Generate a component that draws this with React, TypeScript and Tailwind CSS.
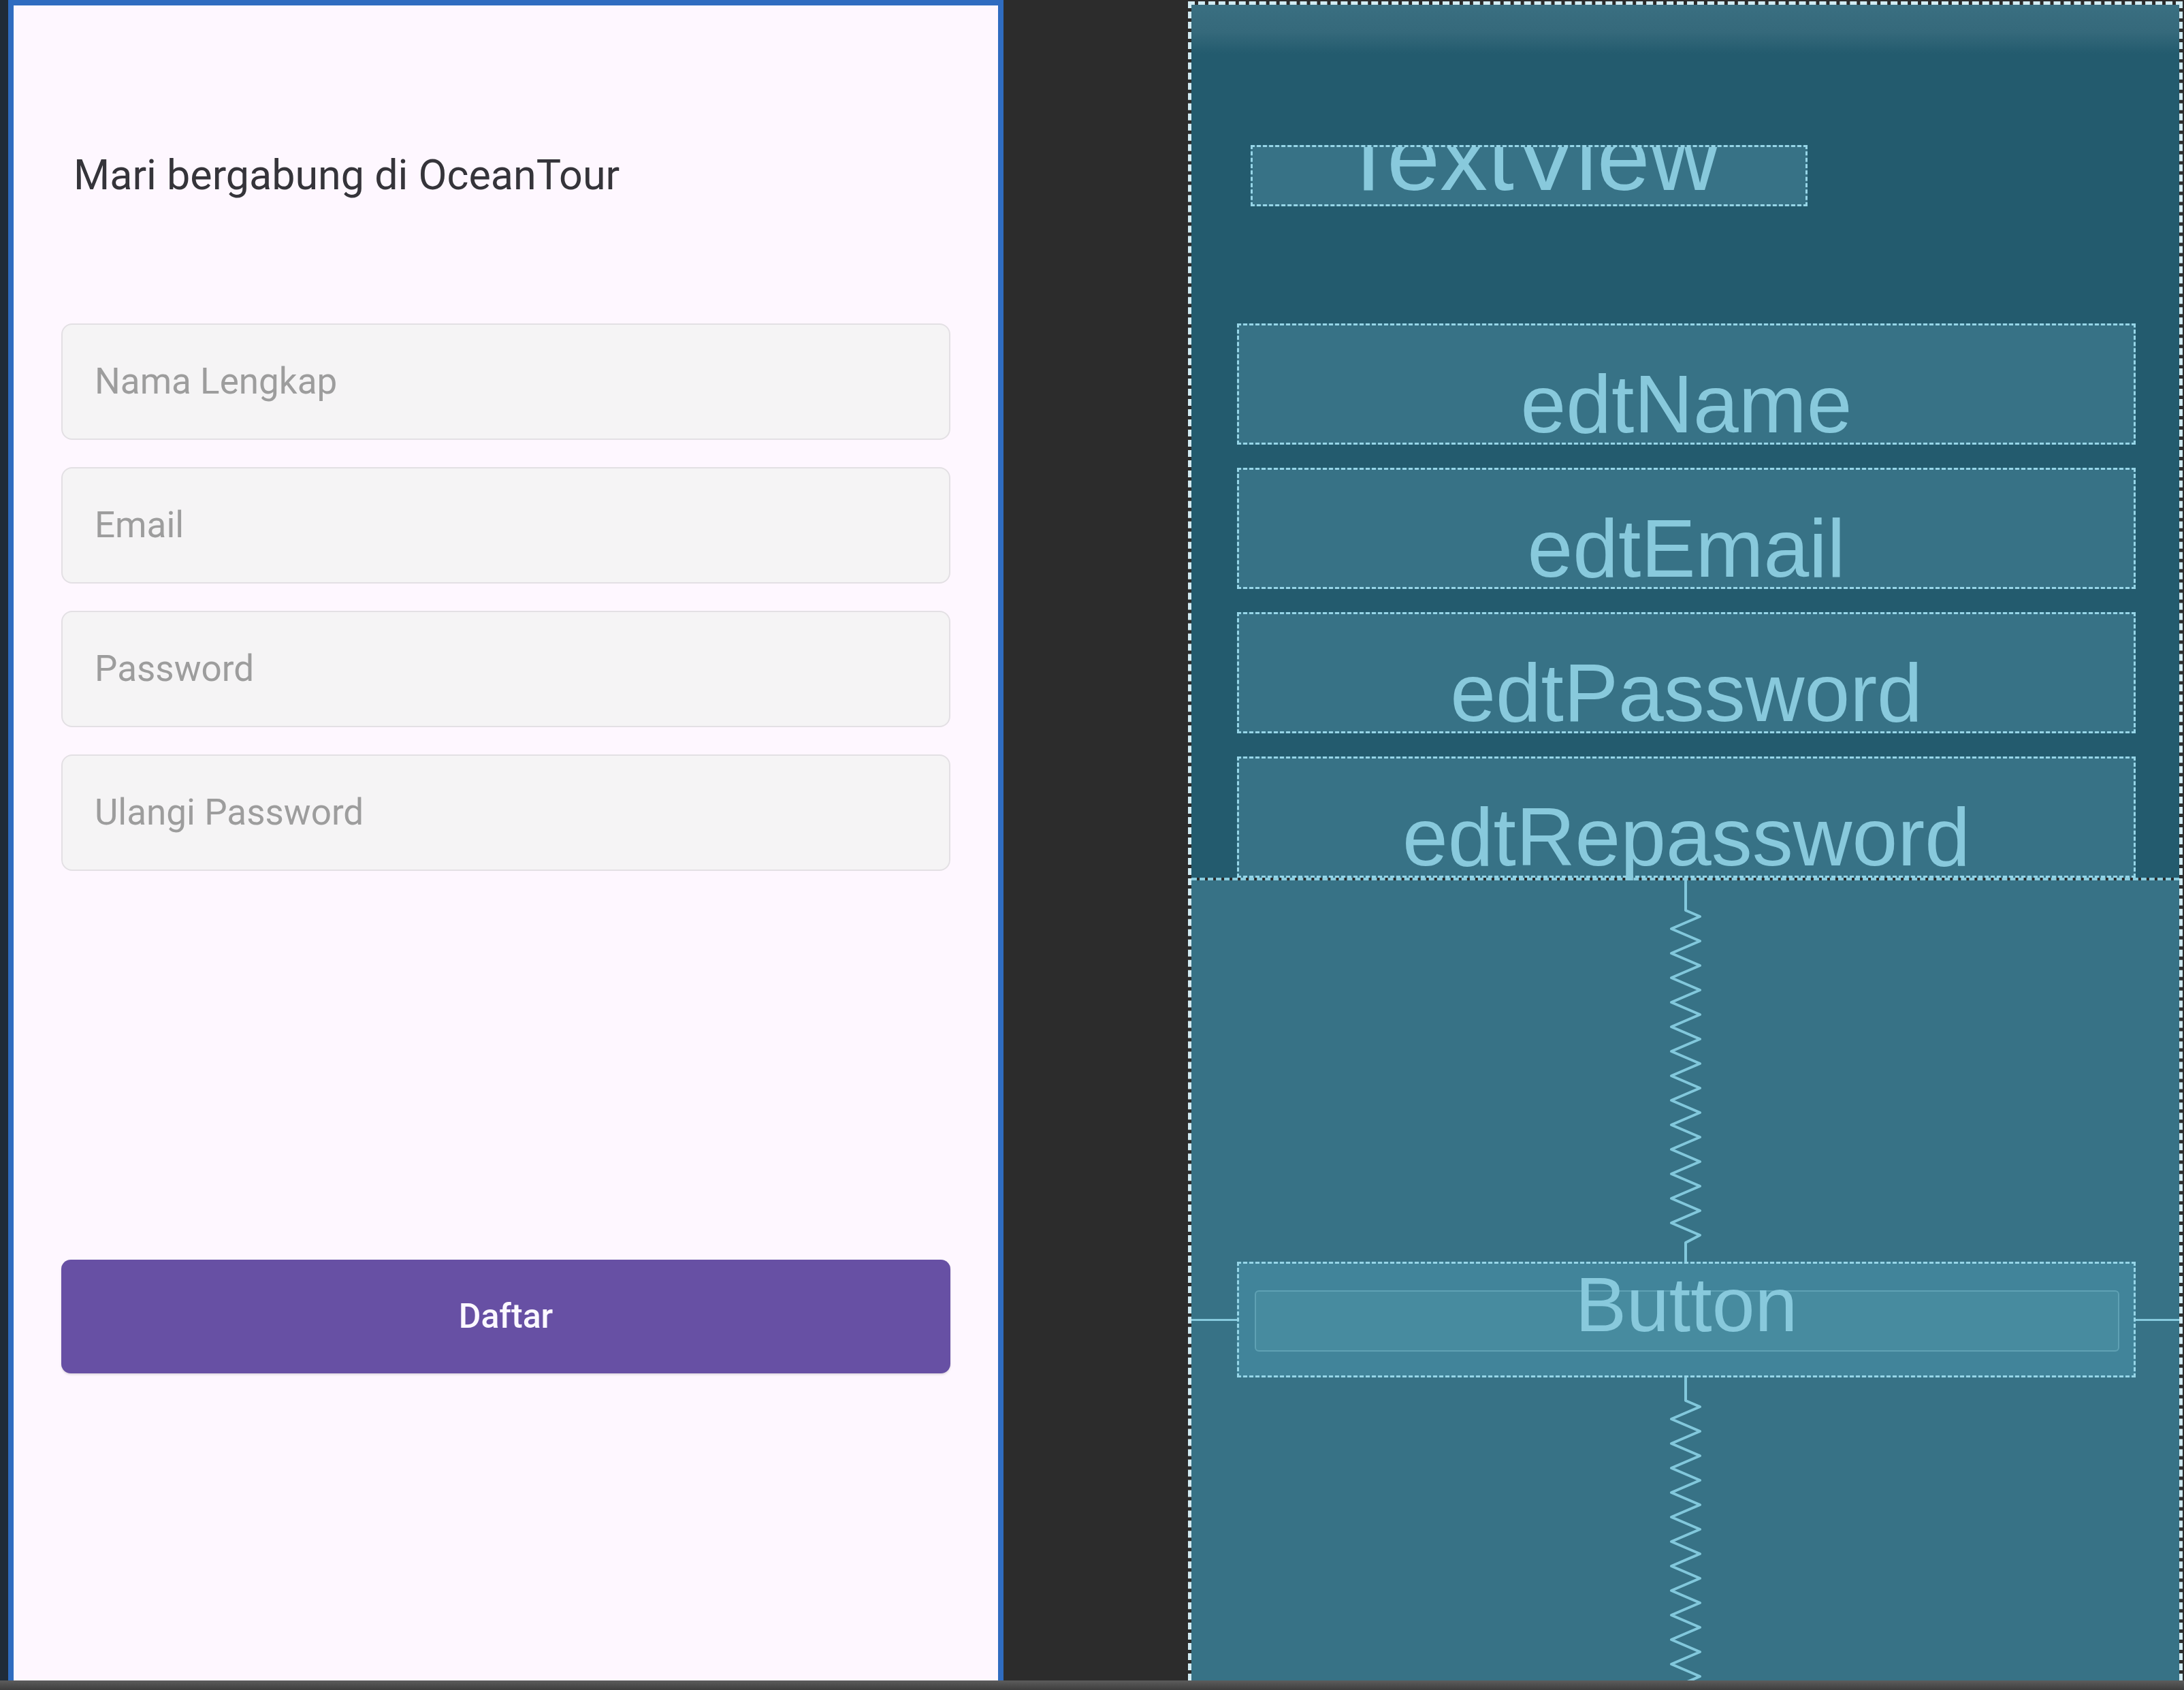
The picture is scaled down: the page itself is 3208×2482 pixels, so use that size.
import React from "react";

function springPoints(height: number, lead: number, end: number, amp: number, period: number) {
  const cx = 30;
  const pts: string[] = [`${cx},0`, `${cx},${lead}`];
  let k = 0;
  let y = lead + period / 4;
  while (y < end) {
    const x = k % 2 === 0 ? cx + amp : cx - amp;
    pts.push(`${x},${y}`);
    k++;
    y = lead + period / 4 + (k * period) / 2;
  }
  pts.push(`${cx},${Math.min(end + period / 4, height)}`);
  pts.push(`${cx},${height}`);
  return pts.join(" ");
}

function Spring({ height, lead, end }: { height: number; lead: number; end: number }) {
  return (
    <svg width="60" height={height} viewBox={`0 0 60 ${height}`} className="shrink-0 block">
      <polyline
        points={springPoints(height, lead, end, 21, 36)}
        fill="none"
        stroke="#82c8dc"
        strokeWidth="4"
        strokeLinejoin="round"
      />
    </svg>
  );
}

const fieldsLeft = ["Nama Lengkap", "Email", "Password", "Ulangi Password"];
const fieldsBlue = ["edtName", "edtEmail", "edtPassword", "edtRepassword"];

export default function App() {
  return (
    <div className="w-[3208px] h-[2482px] flex flex-col bg-[#2c2c2c] overflow-hidden">
      <div className="h-[2468px] flex">
        {/* left dark strip */}
        <div className="w-[12px] h-full bg-[#1f2b38]" />
        {/* phone design */}
        <div
          className="w-[1462px] h-full border-t-[8px] border-l-[8px] border-r-[8px] border-[#2f6cc0] bg-[#fef7ff] flex flex-col px-[70px]"
          style={{ fontFamily: "Roboto, 'Noto Sans', sans-serif" }}
        >
          <div className="mt-[213px] ml-[18px] text-[61px] leading-[72px] text-[#35343a]">
            Mari bergabung di OceanTour
          </div>
          <div className="mt-[182px] flex flex-col gap-[40px]">
            {fieldsLeft.map((f) => (
              <div
                key={f}
                className="h-[171px] rounded-[16px] border-2 border-[#e3e0e4] bg-[#f5f4f5] flex items-center pl-[47px] text-[53px] text-[#9d9d9d]"
              >
                {f}
              </div>
            ))}
          </div>
          <div className="mt-[571px] h-[167px] rounded-[14px] bg-[#6750a4] flex items-center justify-center text-[#fbf8ff] text-[50px] font-medium shadow-[0_2px_3px_rgba(0,0,0,0.12)]">
            Daftar
          </div>
        </div>
        {/* gap */}
        <div className="w-[271px] h-full bg-[#2c2c2c]" />
        {/* blueprint */}
        <div
          className="w-[1461px] h-full pt-[2px] flex flex-col"
          style={{ fontFamily: "'Liberation Sans', Arial, sans-serif" }}
        >
          <div className="flex-1 flex flex-col border-l-[5px] border-t-[5px] border-r-[5px] border-dashed border-[#d2ecf3] overflow-hidden">
            <div className="flex flex-col bg-[linear-gradient(to_bottom,#3a6f81_0px,#35697b_40px,#235b6e_72px,#235b6e_100%)]">
              <div className="mt-[206px] ml-[87px] w-[818px] h-[90px] border-[3px] border-dashed border-[#96d5e7] bg-[#377286] overflow-hidden flex items-end justify-center">
                <span className="text-[140px] leading-[156px] mb-[-9px] text-[#88c9dc] whitespace-nowrap">
                  TextView
                </span>
              </div>
              <div className="mt-[172px] ml-[67px] w-[1320px] flex flex-col gap-[34px]">
                {fieldsBlue.map((f) => (
                  <div
                    key={f}
                    className="h-[178px] border-[3px] border-dashed border-[#96d5e7] bg-[#377286] flex items-end justify-center"
                  >
                    <span className="text-[120px] leading-[134px] mb-[-10px] text-[#88c9dc] whitespace-nowrap">
                      {f}
                    </span>
                  </div>
                ))}
              </div>
            </div>
            <div className="h-[4px] border-t-[4px] border-dashed border-[#8acde0]" />
            <div className="flex-1 bg-[#377286] flex flex-col items-center">
              <Spring height={560} lead={44} end={523} />
              <div className="w-full h-[170px] flex items-center">
                <div className="w-[67px] h-[3px] bg-[#86cadd]" />
                <div className="relative w-[1320px] h-[170px] border-[3px] border-dashed border-[#96d5e7] bg-[#41849a] pt-[39px] pl-[23px] pr-[21px]">
                  <div className="h-[90px] rounded-[6px] border-2 border-[#5fa1b4] bg-[#478b9f]" />
                  <div className="absolute left-0 right-0 top-[-3px] text-center text-[113px] leading-[126px] text-[#88c9dc]">
                    Button
                  </div>
                </div>
                <div className="flex-1 h-[3px] bg-[#86cadd]" />
              </div>
              <div className="flex-1 overflow-hidden">
                <Spring height={460} lead={34} end={470} />
              </div>
            </div>
          </div>
        </div>
      </div>
      <div className="h-[14px] bg-[linear-gradient(to_bottom,#5c5c5c,#3e3e3e)]" />
    </div>
  );
}
